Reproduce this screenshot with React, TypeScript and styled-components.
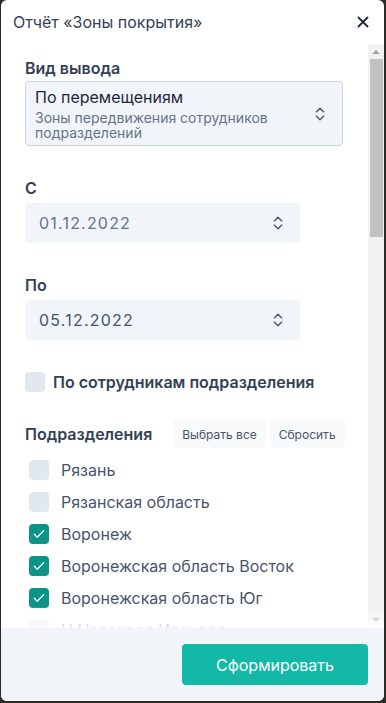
import styled, { createGlobalStyle } from "styled-components";

const GlobalStyle = createGlobalStyle`
  html, body {
    margin: 0;
    padding: 0;
  }
  body {
    background: #2b2b27;
    font-family: Inter, "Noto Sans", sans-serif;
    padding: 0 2px 2px 1px;
  }
  * {
    box-sizing: border-box;
  }
`;

const Dialog = styled.div`
  width: 383px;
  height: 701px;
  background: #ffffff;
  border-radius: 6px;
  overflow: hidden;
  display: flex;
  flex-direction: column;
`;

const Header = styled.div`
  height: 44px;
  flex-shrink: 0;
  display: flex;
  align-items: center;
  justify-content: space-between;
  padding: 0 13px 0 12px;
`;

const Title = styled.span`
  font-size: 16px;
  color: #334155;
`;

const CloseButton = styled.button`
  border: none;
  background: none;
  padding: 0;
  width: 16px;
  height: 16px;
  display: flex;
  align-items: center;
  justify-content: center;
  cursor: pointer;
`;

const BodyWrap = styled.div`
  position: relative;
  flex: 1;
  min-height: 0;
  display: flex;
`;

const Scroller = styled.div`
  flex: 1;
  min-width: 0;
  height: 100%;
  overflow-y: auto;
  overflow-x: hidden;
  scrollbar-width: none;
  padding: 14px 25px 0 24px;
`;

const ScrollBar = styled.div`
  width: 16px;
  flex-shrink: 0;
  background: #f1f1f1;
  display: flex;
  flex-direction: column;
`;

const ScrollArrow = styled.div<{ $down?: boolean }>`
  height: 15px;
  display: flex;
  align-items: center;
  justify-content: center;
  margin-top: ${(p) => (p.$down ? "auto" : "0")};
`;

const ScrollThumb = styled.div`
  height: 178px;
  margin: 0 1px 0 2px;
  background: #c1c1c1;
`;

const Fade = styled.div`
  position: absolute;
  left: 0;
  right: 0;
  bottom: 0;
  height: 22px;
  pointer-events: none;
  background: linear-gradient(rgba(255, 255, 255, 0), rgba(255, 255, 255, 0.9));
`;

const Label = styled.div`
  font-size: 16px;
  line-height: 20px;
  font-weight: 600;
  color: #334155;
  white-space: nowrap;
`;

const Field = styled.div<{ $gap?: number }>`
  display: flex;
  flex-direction: column;
  gap: ${(p) => p.$gap ?? 5}px;
  margin-bottom: 32px;
`;

const SelectBox = styled.div`
  display: flex;
  align-items: center;
  justify-content: space-between;
  background: #f1f5f9;
  border: 1px solid #cbd5e1;
  border-radius: 4px;
  padding: 5px 12px 5px 9px;
`;

const SelectText = styled.div`
  display: flex;
  flex-direction: column;
`;

const SelectMain = styled.div`
  font-size: 16px;
  line-height: 20px;
  color: #1e293b;
`;

const SelectSub = styled.div`
  font-size: 14px;
  line-height: 15px;
  color: #64748b;
  margin-top: 3px;
  width: 250px;
`;

const DateBox = styled.div<{ $muted?: boolean }>`
  width: 275px;
  height: 40px;
  display: flex;
  align-items: center;
  justify-content: space-between;
  background: #f1f5f9;
  border-radius: 4px;
  padding: 0 12px 0 14px;
  font-size: 16px;
  letter-spacing: 1.2px;
  color: ${(p) => (p.$muted ? "#64748b" : "#475569")};
`;

const CheckRow = styled.label<{ $bold?: boolean; $indent?: number }>`
  display: flex;
  align-items: center;
  gap: ${(p) => (p.$bold ? 8 : 12)}px;
  height: ${(p) => (p.$bold ? 20 : 32)}px;
  padding-left: ${(p) => p.$indent ?? 0}px;
  font-size: 16px;
  font-weight: ${(p) => (p.$bold ? 600 : 400)};
  color: ${(p) => (p.$bold ? "#334155" : "#475569")};
  white-space: nowrap;
`;

const Box = styled.span<{ $checked?: boolean }>`
  width: 20px;
  height: 20px;
  border-radius: 4px;
  flex-shrink: 0;
  display: flex;
  align-items: center;
  justify-content: center;
  background: ${(p) => (p.$checked ? "#0d9488" : "#e2e8f0")};
`;

const SectionHead = styled.div`
  display: flex;
  align-items: center;
  margin-top: 28px;
  margin-bottom: 6px;
`;

const SmallButton = styled.button`
  flex-shrink: 0;
  white-space: nowrap;
  border: none;
  background: #f8fafc;
  border-radius: 4px;
  height: 28px;
  padding: 0 9px;
  font-family: inherit;
  font-size: 12px;
  color: #475569;
  margin-left: 4px;
`;

const SectionLabel = styled(Label)`
  flex-shrink: 0;
  margin-right: 17px;
`;

const Footer = styled.div`
  height: 73px;
  flex-shrink: 0;
  background: #f1f5f9;
  display: flex;
  justify-content: flex-end;
  padding: 16px 16px 0 0;
`;

const SubmitButton = styled.button`
  width: 186px;
  height: 41px;
  border: none;
  border-radius: 4px;
  background: #14b8a6;
  color: #ffffff;
  font-family: inherit;
  font-size: 16px;
`;

function UpDown() {
  return (
    <svg width="20" height="20" viewBox="0 0 24 24" fill="none" stroke="#475569" strokeWidth="1.6" strokeLinecap="round" strokeLinejoin="round">
      <path d="M7.5 9.5 12 5l4.5 4.5" />
      <path d="M7.5 14.5 12 19l4.5-4.5" />
    </svg>
  );
}

function Check() {
  return (
    <svg width="14" height="14" viewBox="0 0 24 24" fill="none" stroke="#ffffff" strokeWidth="2.2" strokeLinecap="round" strokeLinejoin="round">
      <path d="M4 12.5l5 5L20 6.5" />
    </svg>
  );
}

function Arrow({ down }: { down?: boolean }) {
  return (
    <svg width="8" height="5" viewBox="0 0 8 5">
      <path d={down ? "M0 0h8L4 4z" : "M0 5h8L4 1z"} fill="#a3a3a3" />
    </svg>
  );
}

const units: { name: string; checked: boolean }[] = [
  { name: "Рязань", checked: false },
  { name: "Рязанская область", checked: false },
  { name: "Воронеж", checked: true },
  { name: "Воронежская область Восток", checked: true },
  { name: "Воронежская область Юг", checked: true },
  { name: "Н.Новгород Иваново", checked: false },
  ...[
    "Нижегородская область",
    "Москва",
    "Московская область Север",
    "Московская область Юг",
    "Тула",
    "Тульская область",
    "Калуга",
    "Калужская область",
    "Брянск",
    "Брянская область",
    "Орёл",
    "Орловская область",
    "Курск",
    "Курская область",
    "Белгород",
    "Белгородская область",
    "Липецк",
    "Липецкая область",
    "Тамбов",
    "Тамбовская область",
    "Смоленск",
    "Смоленская область",
    "Тверь",
    "Тверская область",
    "Ярославль",
    "Ярославская область",
    "Кострома",
    "Костромская область",
    "Владимир",
    "Владимирская область",
    "Иваново",
    "Ивановская область",
    "Пенза",
    "Пензенская область",
    "Саратов",
    "Саратовская область",
    "Самара",
    "Самарская область",
  ].map((name) => ({ name, checked: false })),
];

export default function App() {
  return (
    <>
      <GlobalStyle />
      <Dialog>
        <Header>
          <Title>Отчёт «Зоны покрытия»</Title>
          <CloseButton>
            <svg width="12" height="12" viewBox="0 0 12 12" stroke="#1e293b" strokeWidth="1.8" strokeLinecap="round">
              <path d="M1.5 1.5l9 9M10.5 1.5l-9 9" />
            </svg>
          </CloseButton>
        </Header>
        <BodyWrap>
          <Scroller>
            <Field $gap={3}>
              <Label>Вид вывода</Label>
              <SelectBox>
                <SelectText>
                  <SelectMain>По перемещениям</SelectMain>
                  <SelectSub>Зоны передвижения сотрудников подразделений</SelectSub>
                </SelectText>
                <UpDown />
              </SelectBox>
            </Field>
            <Field>
              <Label>С</Label>
              <DateBox $muted>
                01.12.2022
                <UpDown />
              </DateBox>
            </Field>
            <Field>
              <Label>По</Label>
              <DateBox>
                05.12.2022
                <UpDown />
              </DateBox>
            </Field>
            <CheckRow $bold>
              <Box />
              По сотрудникам подразделения
            </CheckRow>
            <SectionHead>
              <SectionLabel>Подразделения</SectionLabel>
              <SmallButton>Выбрать все</SmallButton>
              <SmallButton>Сбросить</SmallButton>
            </SectionHead>
            {units.map((u) => (
              <CheckRow key={u.name} $indent={4}>
                <Box $checked={u.checked}>{u.checked && <Check />}</Box>
                {u.name}
              </CheckRow>
            ))}
          </Scroller>
          <ScrollBar>
            <ScrollArrow>
              <Arrow />
            </ScrollArrow>
            <ScrollThumb />
            <ScrollArrow $down>
              <Arrow down />
            </ScrollArrow>
          </ScrollBar>
          <Fade />
        </BodyWrap>
        <Footer>
          <SubmitButton>Сформировать</SubmitButton>
        </Footer>
      </Dialog>
    </>
  );
}
